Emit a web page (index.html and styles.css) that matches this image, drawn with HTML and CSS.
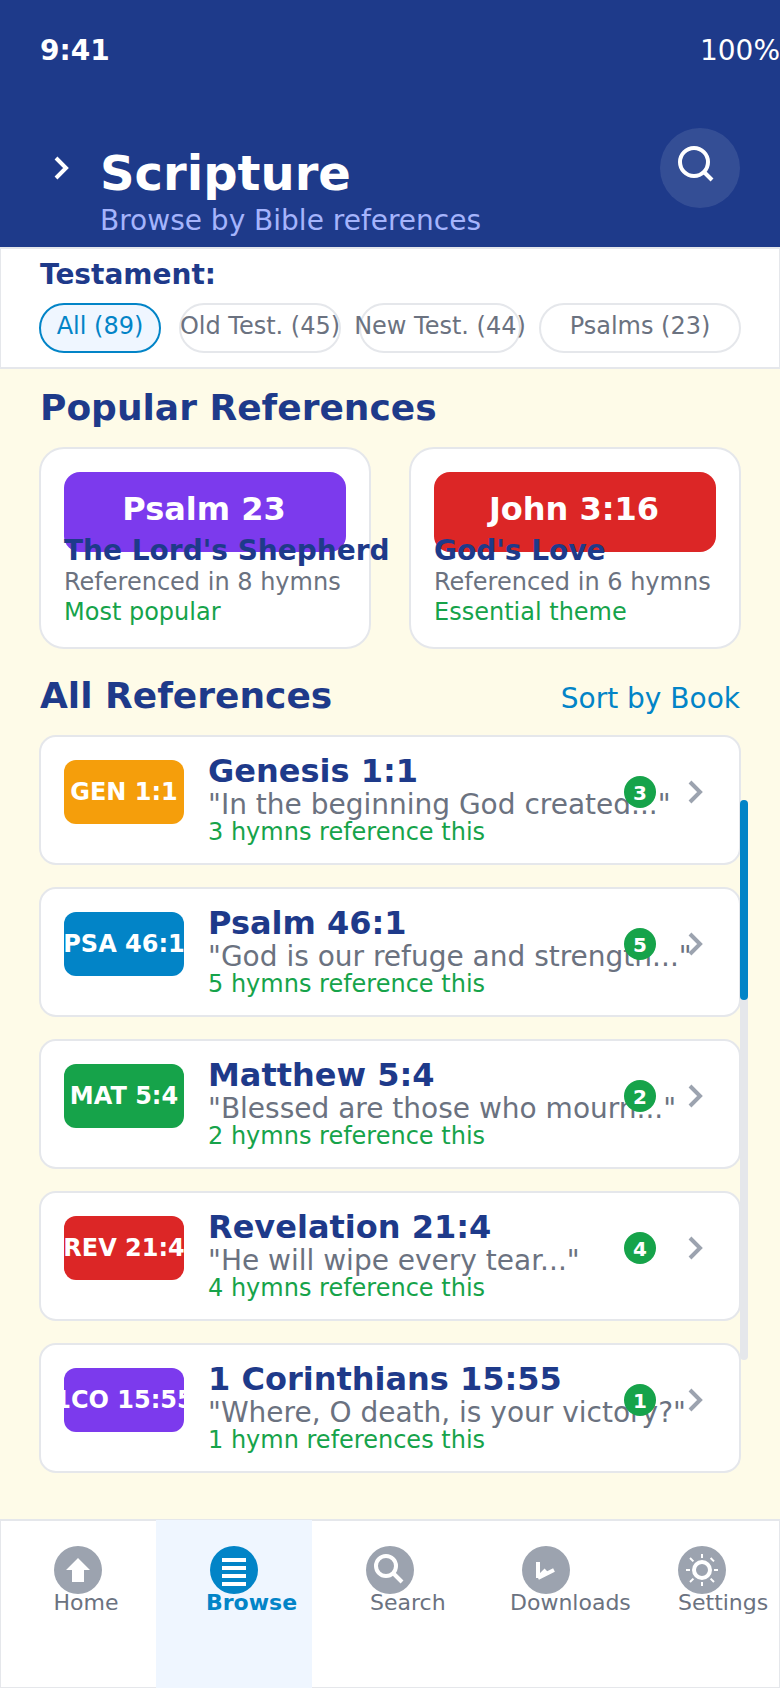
FILE: index.html
```html
<!DOCTYPE html>
<html lang="en">
<head>
<meta charset="utf-8">
<title>Scripture</title>
<link rel="stylesheet" href="styles.css">
</head>
<body>
<div class="screen">
  <header class="header">
    <div class="status"><span class="time">9:41</span><span>100%</span></div>
    <div class="titlebar">
      <svg class="back" width="60" height="80" viewBox="0 0 60 80"><path d="M16 30l10 10-10 10" fill="none" stroke="#fff" stroke-width="4"/></svg>
      <div class="titles">
        <h1 class="title">Scripture</h1>
        <p class="subtitle">Browse by Bible references</p>
      </div>
      <button class="search" aria-label="Search"><svg width="80" height="80" viewBox="0 0 80 80" fill="none" stroke="#fff" stroke-width="4"><circle cx="34" cy="34" r="14"/><path d="M44 44l8 8"/></svg></button>
    </div>
  </header>

  <section class="filter">
    <h2 class="filter-title">Testament:</h2>
    <div class="chips">
      <span class="chip chip-active">All (89)</span>
      <span class="chip">Old Test. (45)</span>
      <span class="chip">New Test. (44)</span>
      <span class="chip">Psalms (23)</span>
    </div>
  </section>

  <main class="content">
    <h2 class="heading">Popular References</h2>
    <div class="popular">
      <article class="card">
        <div class="banner violet">Psalm 23</div>
        <h3 class="card-title">The Lord's Shepherd</h3>
        <p class="card-meta">Referenced in 8 hymns</p>
        <p class="card-note">Most popular</p>
      </article>
      <article class="card">
        <div class="banner red">John 3:16</div>
        <h3 class="card-title">God's Love</h3>
        <p class="card-meta">Referenced in 6 hymns</p>
        <p class="card-note">Essential theme</p>
      </article>
    </div>

    <div class="list-head">
      <h2 class="heading">All References</h2>
      <a class="sort">Sort by Book</a>
    </div>
    <div class="list">
      <article class="row">
        <span class="badge amber">GEN 1:1</span>
        <div class="row-body">
          <h3 class="row-title">Genesis 1:1</h3>
          <p class="verse">"In the beginning God created..."</p>
          <p class="uses">3 hymns reference this</p>
        </div>
        <span class="count">3</span>
        <svg class="chevron" width="18" height="32" viewBox="0 0 18 32"><path d="M4 6l10 10L4 26"/></svg>
      </article>
      <article class="row">
        <span class="badge blue">PSA 46:1</span>
        <div class="row-body">
          <h3 class="row-title">Psalm 46:1</h3>
          <p class="verse">"God is our refuge and strength..."</p>
          <p class="uses">5 hymns reference this</p>
        </div>
        <span class="count">5</span>
        <svg class="chevron" width="18" height="32" viewBox="0 0 18 32"><path d="M4 6l10 10L4 26"/></svg>
      </article>
      <article class="row">
        <span class="badge green">MAT 5:4</span>
        <div class="row-body">
          <h3 class="row-title">Matthew 5:4</h3>
          <p class="verse">"Blessed are those who mourn..."</p>
          <p class="uses">2 hymns reference this</p>
        </div>
        <span class="count">2</span>
        <svg class="chevron" width="18" height="32" viewBox="0 0 18 32"><path d="M4 6l10 10L4 26"/></svg>
      </article>
      <article class="row">
        <span class="badge red">REV 21:4</span>
        <div class="row-body">
          <h3 class="row-title">Revelation 21:4</h3>
          <p class="verse">"He will wipe every tear..."</p>
          <p class="uses">4 hymns reference this</p>
        </div>
        <span class="count">4</span>
        <svg class="chevron" width="18" height="32" viewBox="0 0 18 32"><path d="M4 6l10 10L4 26"/></svg>
      </article>
      <article class="row">
        <span class="badge violet">1CO 15:55</span>
        <div class="row-body">
          <h3 class="row-title">1 Corinthians 15:55</h3>
          <p class="verse">"Where, O death, is your victory?"</p>
          <p class="uses">1 hymn references this</p>
        </div>
        <span class="count">1</span>
        <svg class="chevron" width="18" height="32" viewBox="0 0 18 32"><path d="M4 6l10 10L4 26"/></svg>
      </article>
    </div>
    <div class="scrollbar"><div class="thumb"></div></div>
  </main>

  <nav class="nav">
    <a class="tab home">
      <svg class="tab-icon" width="48" height="48" viewBox="0 0 48 48"><circle cx="24" cy="24" r="24" fill="#9ca3af"/><path d="M24 12l12 12h-6v12H18V24h-6z" fill="#fff"/></svg>
      <span class="tab-label">Home</span>
    </a>
    <a class="tab browse active">
      <svg class="tab-icon" width="48" height="48" viewBox="0 0 48 48"><circle cx="24" cy="24" r="24" fill="#0284c7"/><path d="M12 12h24v4H12zM12 20h24v4H12zM12 28h24v4H12zM12 36h24v4H12z" fill="#fff"/></svg>
      <span class="tab-label">Browse</span>
    </a>
    <a class="tab find">
      <svg class="tab-icon" width="48" height="48" viewBox="0 0 48 48"><circle cx="24" cy="24" r="24" fill="#9ca3af"/><g fill="none" stroke="#fff" stroke-width="4"><circle cx="20" cy="20" r="10"/><path d="M27 27l9 9"/></g></svg>
      <span class="tab-label">Search</span>
    </a>
    <a class="tab downloads">
      <svg class="tab-icon" width="48" height="48" viewBox="0 0 48 48"><circle cx="24" cy="24" r="24" fill="#9ca3af"/><path d="M16 16v16M16 32l8-8M16 32l16-8" fill="none" stroke="#fff" stroke-width="4"/></svg>
      <span class="tab-label">Downloads</span>
    </a>
    <a class="tab settings">
      <svg class="tab-icon" width="48" height="48" viewBox="0 0 48 48"><circle cx="24" cy="24" r="24" fill="#9ca3af"/><g fill="none" stroke="#fff"><circle cx="24" cy="24" r="8" stroke-width="4"/><path stroke-width="2" d="M24 8v4M24 36v4M8 24h4M36 24h4M12 12l3.4 3.4M32.6 12l3.4 3.4M32.6 32.6l3.4 3.4M15.4 32.6L12 36"/></g></svg>
      <span class="tab-label">Settings</span>
    </a>
  </nav>
</div>
</body>
</html>
```

FILE: styles.css
```css
* { box-sizing: border-box; }
body, h1, h2, h3, p { margin: 0; }
body { font-family: "DejaVu Sans", sans-serif; white-space: nowrap; }

.screen {
  position: relative;
  display: flex;
  flex-direction: column;
  width: 780px;
  height: 1688px;
  overflow: hidden;
  background: #fefbe8;
}

.header { height: 247px; flex: none; padding-top: 34px; background: #1e3a8a; color: #fff; }
.status { display: flex; justify-content: space-between; padding-left: 40px; font-size: 28px; line-height: 33px; }
.time { font-weight: 700; }
.titlebar { display: flex; margin-top: 61px; padding: 0 40px; }
.back { flex: none; }
.titles { flex: 1; padding-top: 17px; }
.title { font-size: 48px; line-height: 56px; }
.subtitle { margin-top: 3px; font-size: 28px; line-height: 33px; color: #a5b4fc; }
.search { width: 80px; height: 80px; padding: 0; border: 0; border-radius: 50%; background: rgba(255, 255, 255, .1); }
.search svg { display: block; }

.filter {
  flex: none;
  height: 122px;
  padding: 9px 38px 0;
  border: 2px solid #e5e7eb;
  border-width: 2px 1px;
  background: #fff;
}
.filter-title { margin-left: 1px; font-size: 28px; line-height: 33px; color: #1e3a8a; }
.chips { display: grid; grid-template-columns: 122px 162px 162px 202px; column-gap: 18px; margin-top: 12px; }
.chip {
  display: flex;
  justify-content: center;
  height: 50px;
  padding-top: 7px;
  border: 2px solid #e5e7eb;
  border-radius: 25px;
  background: #fff;
  color: #6b7280;
  font-size: 24px;
  line-height: 28px;
}
.chip-active { border-color: #0284c7; background: #eff6ff; color: #0284c7; }

.content { flex: 1; padding: 18px 39px 0; }
.heading { padding-left: 1px; font-size: 36px; line-height: 42px; color: #1e3a8a; }
.popular { display: grid; grid-template-columns: 332px 332px; column-gap: 38px; margin-top: 18px; }
.card { height: 202px; padding: 23px; border: 2px solid #e5e7eb; border-radius: 25px; background: #fff; font-size: 24px; line-height: 28px; }
.banner {
  height: 80px;
  padding: 18px 2px 0 0;
  border-radius: 16px;
  color: #fff;
  font-size: 32px;
  font-weight: 700;
  line-height: 38px;
  text-align: center;
}
.card-title { position: relative; margin-top: -18px; font-size: 28px; line-height: 33px; color: #1e3a8a; }
.card-meta { margin-top: 1px; color: #6b7280; }
.card-note { margin-top: 2px; color: #16a34a; }

.violet { background: #7c3aed; }
.red { background: #dc2626; }
.amber { background: #f59e0b; }
.blue { background: #0284c7; }
.green { background: #16a34a; }

.list-head { display: flex; justify-content: space-between; align-items: baseline; margin-top: 26px; padding-right: 1px; }
.sort { font-size: 28px; line-height: 33px; color: #0284c7; }
.list { display: grid; grid-template-columns: minmax(0, 1fr); row-gap: 22px; margin-top: 18px; }
.row { display: flex; height: 130px; padding: 15px 23px 0; border: 2px solid #e5e7eb; border-radius: 17px; background: #fff; }
.badge {
  display: flex;
  flex: none;
  justify-content: center;
  width: 120px;
  height: 64px;
  margin-top: 8px;
  padding-top: 18px;
  border-radius: 12px;
  color: #fff;
  font-size: 24px;
  font-weight: 700;
  line-height: 28px;
}
.row-body { flex: 1; min-width: 0; margin-left: 24px; font-size: 24px; line-height: 28px; }
.row-title { font-size: 32px; line-height: 38px; color: #1e3a8a; }
.verse { margin-top: -2px; font-size: 28px; line-height: 33px; color: #6b7280; }
.uses { margin-top: -3px; color: #16a34a; }
.count {
  flex: none;
  width: 32px;
  height: 32px;
  margin-top: 24px;
  padding-top: 5px;
  border-radius: 50%;
  background: #16a34a;
  color: #fff;
  font-size: 20px;
  font-weight: 700;
  line-height: 24px;
  text-align: center;
}
.chevron { flex: none; margin: 24px 12px 0 30px; fill: none; stroke: #9ca3af; stroke-width: 4; }

/* Scroll indicator drawn over the right edge of the list */
.scrollbar { position: absolute; top: 800px; left: 740px; width: 8px; height: 560px; border-radius: 4px; background: #e5e7eb; }
.thumb { height: 200px; border-radius: 4px; background: #0284c7; }

.nav {
  display: grid;
  grid-template-columns: repeat(5, 156px);
  flex: none;
  height: 169px;
  padding-top: 1px;
  background: #fff;
  box-shadow: inset 0 2px #e5e7eb, inset 1px 0 #e5e7eb, inset -1px -1px #e5e7eb;
}
.tab { padding-top: 26px; color: #6b7280; font-size: 22px; line-height: 25px; }
.tab-icon { display: block; margin-left: 54px; }
.tab-label { display: block; margin-top: -4px; }
.home .tab-label { margin-left: 53.5px; }
.browse .tab-label { margin-left: 50px; }
.find .tab-label { margin-left: 58px; }
.downloads .tab-label { margin-left: 42px; }
.settings .tab-label { margin-left: 54px; }
.active { background: #eff6ff; color: #0284c7; font-weight: 700; }
```
